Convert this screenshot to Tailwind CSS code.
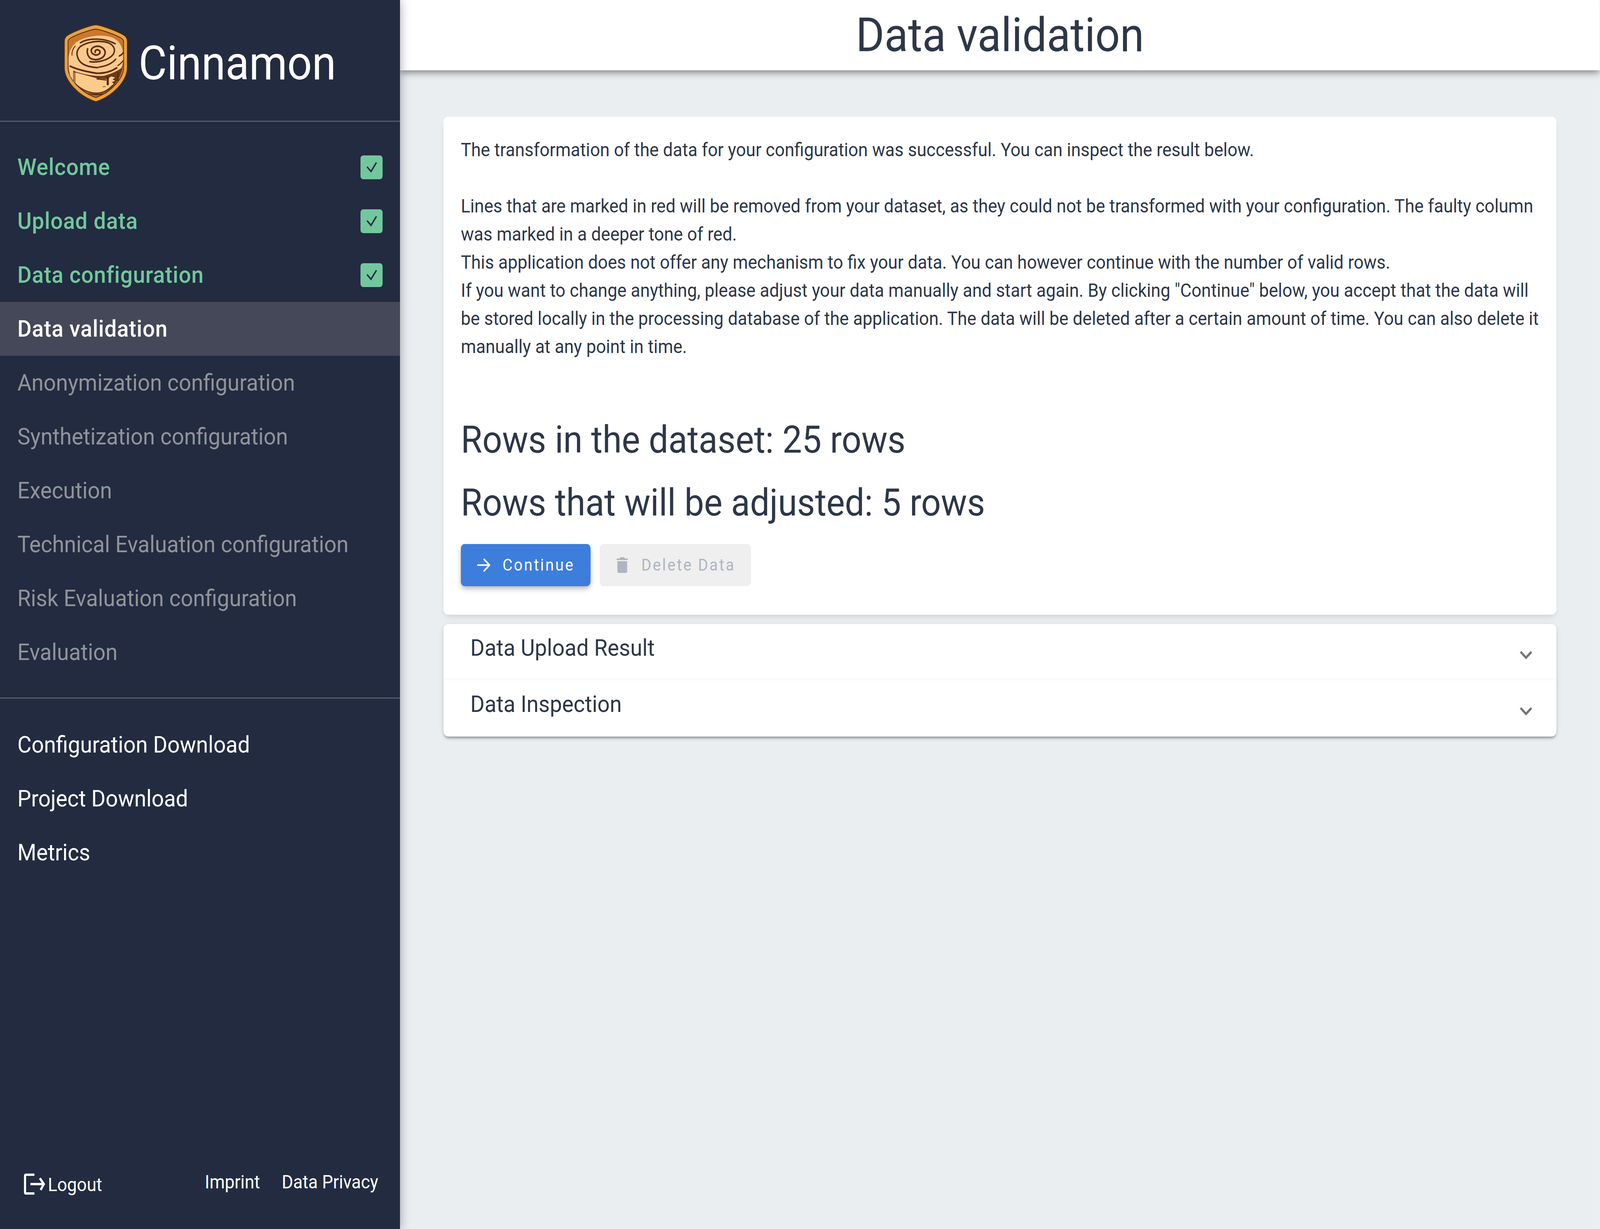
<!DOCTYPE html>
<html lang="en">
<head>
<meta charset="utf-8">
<title>Cinnamon</title>
<script src="https://cdn.jsdelivr.net/npm/@tailwindcss/browser@4"></script>
</head>
<body class="m-0">
<div class="w-screen h-screen overflow-hidden">
<div class="flex w-[4416px] h-[3147px] origin-top-left scale-x-[0.9275] overflow-hidden bg-[#eaeef1] font-['Roboto',sans-serif] text-[#2d3748]">
  <aside class="relative z-20 flex flex-col w-[1104px] h-full shrink-0 bg-[#222b40] shadow-[0_0_26px_rgba(0,0,0,0.35)] text-[60px] leading-[138px]">
    <div class="flex items-center justify-center gap-[29px] h-[312px] shrink-0 border-b-[3px] border-[#535a6b] pt-[14px]">
      <svg class="w-[177px] h-[200px]" viewBox="146 58 538 608">
        <path d="M415 62C480 70 600 115 650 142C672 155 680 170 680 190L680 395C680 500 560 620 415 662C270 620 150 500 150 395L150 190C150 170 158 155 180 142C230 115 350 70 415 62Z" fill="#e9a140" stroke="#4f2a14" stroke-width="8"/>
        <path d="M415 96C470 101 590 145 625 165C640 172 648 180 648 195L648 395C648 480 540 590 415 628C290 590 182 480 182 395L182 195C182 180 190 172 205 165C240 145 360 101 415 96Z" fill="#c9772b" stroke="#4f2a14" stroke-width="6"/>
        <path d="M186 345L190 430L236 515C270 565 350 600 420 600C480 600 530 575 565 535C605 495 642 430 645 345Z" fill="#6d3a1a"/>
        <path d="M186 345L215 385L236 440L236 515L200 460C190 430 185 390 186 345Z" fill="#f8c98b"/>
        <path d="M240 430L430 478L505 482L545 462L582 472L560 488L585 496L555 510L570 522L545 540C510 575 470 592 420 592C350 590 285 560 240 515Z" fill="#fccb89" stroke="#4f2a14" stroke-width="4"/>
        <path d="M186 345C184 290 205 225 265 190C330 150 480 130 560 165C620 190 648 250 645 320C640 375 640 395 620 405C580 430 540 445 480 460C400 465 300 445 240 425C205 400 190 375 186 345Z" fill="#f8c98b"/>
        <g fill="none" stroke="#5b2a10" stroke-linecap="round" stroke-linejoin="round">
          <path d="M410 277C403 258 430 250 446 265C462 286 430 302 405 296C368 285 364 245 410 232C460 220 502 255 491 291C478 325 420 346 375 326C350 313 336 280 346 250" stroke-width="13"/>
          <path d="M365 350C430 358 520 340 562 292C586 250 560 215 510 200C440 182 340 195 285 232C250 262 250 300 275 340C300 375 350 392 430 396" stroke-width="12"/>
          <path d="M285 203C340 168 470 158 578 210" stroke-width="11"/>
          <path d="M215 300C212 270 225 245 242 228" stroke-width="7"/>
          <path d="M200 385C260 412 340 428 420 440C480 442 540 428 590 398" stroke-width="13"/>
          <path d="M440 392C500 385 550 365 582 330" stroke-width="11"/>
          <path d="M612 305C625 300 638 290 642 282" stroke-width="12"/>
          <path d="M600 380C615 372 630 358 640 345" stroke-width="9"/>
          <path d="M228 425L228 505" stroke-width="5"/>
          <path d="M515 470L515 525" stroke-width="18"/>
          <path d="M475 545L495 543" stroke-width="5"/>
          <path d="M425 484L500 492" stroke-width="9"/>
          <path d="M600 430L600 495" stroke-width="10"/>
        </g>
        <path d="M335 592C400 620 450 617 515 590C460 603 390 603 335 592Z" fill="#5b2a10"/>
      </svg>
      <span class="text-[120px] leading-none text-white">Cinnamon</span>
    </div>
    <nav class="pt-[47px] pb-[47px] shrink-0 border-b-[3px] border-[#535a6b]">
      <a class="flex items-center justify-between pl-[48px] pr-[48px] h-[138px] font-medium tracking-[1px] text-[#73c79d]"><span>Welcome</span>
        <span class="flex items-center justify-center w-[61px] h-[61px] rounded-[8px] bg-[#73c79d]"><svg class="w-[34px] h-[30px]" viewBox="0 0 34 30" fill="none" stroke="#222b40" stroke-width="4"><path d="M4 14L15 26L30 3"/></svg></span></a>
      <a class="flex items-center justify-between pl-[48px] pr-[48px] h-[138px] font-medium tracking-[1px] text-[#73c79d]"><span>Upload data</span>
        <span class="flex items-center justify-center w-[61px] h-[61px] rounded-[8px] bg-[#73c79d]"><svg class="w-[34px] h-[30px]" viewBox="0 0 34 30" fill="none" stroke="#222b40" stroke-width="4"><path d="M4 14L15 26L30 3"/></svg></span></a>
      <a class="flex items-center justify-between pl-[48px] pr-[48px] h-[138px] font-medium tracking-[1px] text-[#73c79d]"><span>Data configuration</span>
        <span class="flex items-center justify-center w-[61px] h-[61px] rounded-[8px] bg-[#73c79d]"><svg class="w-[34px] h-[30px]" viewBox="0 0 34 30" fill="none" stroke="#222b40" stroke-width="4"><path d="M4 14L15 26L30 3"/></svg></span></a>
      <a class="block pl-[48px] h-[138px] font-medium tracking-[1px] bg-[#454859] text-white">Data validation</a>
      <a class="block pl-[48px] h-[138px] text-[#92939a]">Anonymization configuration</a>
      <a class="block pl-[48px] h-[138px] text-[#92939a]">Synthetization configuration</a>
      <a class="block pl-[48px] h-[138px] text-[#92939a]">Execution</a>
      <a class="block pl-[48px] h-[138px] text-[#92939a]">Technical Evaluation configuration</a>
      <a class="block pl-[48px] h-[138px] text-[#92939a]">Risk Evaluation configuration</a>
      <a class="block pl-[48px] h-[138px] text-[#92939a]">Evaluation</a>
    </nav>
    <nav class="pt-[49px] text-white">
      <a class="block pl-[48px] h-[138px]">Configuration Download</a>
      <a class="block pl-[48px] h-[138px]">Project Download</a>
      <a class="block pl-[48px] h-[138px]">Metrics</a>
    </nav>
    <footer class="mt-auto flex items-start justify-between pl-[66px] pr-[60px] pb-[86px] text-[48px] leading-[54px] text-white">
      <div class="flex items-start gap-[6px]">
        <svg class="w-[60px] h-[54px]" viewBox="0 0 60 54" fill="none"><path d="M29 3H6Q3 3 3 6V48Q3 51 6 51H29" stroke="white" stroke-width="6"/><path d="M18 27H52" stroke="white" stroke-width="6"/><path d="M44 12L55 27L46 42" stroke="white" stroke-width="6"/></svg>
        <span class="mt-[2px]">Logout</span>
      </div>
      <div class="flex gap-[60px] -mt-[5px]"><a>Imprint</a><a>Data Privacy</a></div>
    </footer>
  </aside>
  <div class="flex-1 min-w-0 flex flex-col">
    <header class="relative z-10 h-[180px] shrink-0 bg-white shadow-[0_6px_18px_rgba(0,0,0,0.45)] flex items-center justify-center text-[120px] leading-none">Data validation</header>
    <main class="px-[120px] pt-[119px]">
      <section class="rounded-[14px] bg-white px-[48px] pt-[49px] h-[1275px] shadow-[0_10px_18px_-3px_rgba(0,0,0,0.08),0_5px_10px_-3px_rgba(0,0,0,0.05)] text-[48px] leading-[72px]">
        <p>The transformation of the data for your configuration was successful. You can inspect the result below.</p>
        <p class="mt-[72px]">Lines that are marked in red will be removed from your dataset, as they could not be transformed with your configuration. The faulty column was marked in a deeper tone of red.<br>This application does not offer any mechanism to fix your data. You can however continue with the number of valid rows.<br>If you want to change anything, please adjust your data manually and start again. By clicking "Continue" below, you accept that the data will be stored locally in the processing database of the application. The data will be deleted after a certain amount of time. You can also delete it manually at any point in time.</p>
        <h2 class="mt-[122px] text-[96px] leading-[161px]">Rows in the dataset: 25 rows</h2>
        <h2 class="text-[96px] leading-[161px]">Rows that will be adjusted: 5 rows</h2>
        <div class="flex gap-[25px] mt-[25px] text-[42px] tracking-[4px]">
          <button class="flex items-center gap-[34px] w-[358px] h-[108px] pl-[45px] rounded-[11px] bg-[#3d7ddb] text-white shadow-[0_8px_14px_-2px_rgba(0,0,0,0.3)]"><svg class="w-[36px] h-[36px]" viewBox="0 0 36 36" fill="none" stroke="white" stroke-width="4"><path d="M0 18H33M18 2L34 18L18 34"/></svg><span>Continue</span></button>
          <button class="flex items-center gap-[37px] w-[418px] h-[108px] pl-[47px] rounded-[11px] bg-[#efefef] text-[#aeb5c0]"><svg class="w-[31px] h-[40px]" viewBox="0 0 31 40" fill="#aeb5c0"><path d="M10 0H21L23 3H31V7H0V3H8ZM2 10H29V36Q29 40 25 40H6Q2 40 2 36Z"/></svg><span>Delete Data</span></button>
        </div>
      </section>
      <section class="mt-[24px] rounded-[14px] bg-white h-[288px] text-[60px] shadow-[0_7px_7px_-3px_rgba(0,0,0,0.32),0_3px_14px_rgba(0,0,0,0.1)]">
        <div class="flex items-start justify-between h-[144px] pl-[74px] pr-[67px] pt-[23px] leading-[76px]"><span>Data Upload Result</span><svg class="w-[34px] h-[21px] mt-[46px]" viewBox="0 0 34 21" fill="none" stroke="#757575" stroke-width="6"><path d="M2 2L17 17L32 2"/></svg></div>
        <div class="relative flex items-start justify-between h-[144px] pl-[74px] pr-[67px] pt-[23px] leading-[76px] rounded-b-[14px] shadow-[0_-3px_10px_rgba(0,0,0,0.04)]"><span>Data Inspection</span><svg class="w-[34px] h-[21px] mt-[46px]" viewBox="0 0 34 21" fill="none" stroke="#757575" stroke-width="6"><path d="M2 2L17 17L32 2"/></svg></div>
      </section>
    </main>
  </div>
</div>
</div>
</body>
</html>
